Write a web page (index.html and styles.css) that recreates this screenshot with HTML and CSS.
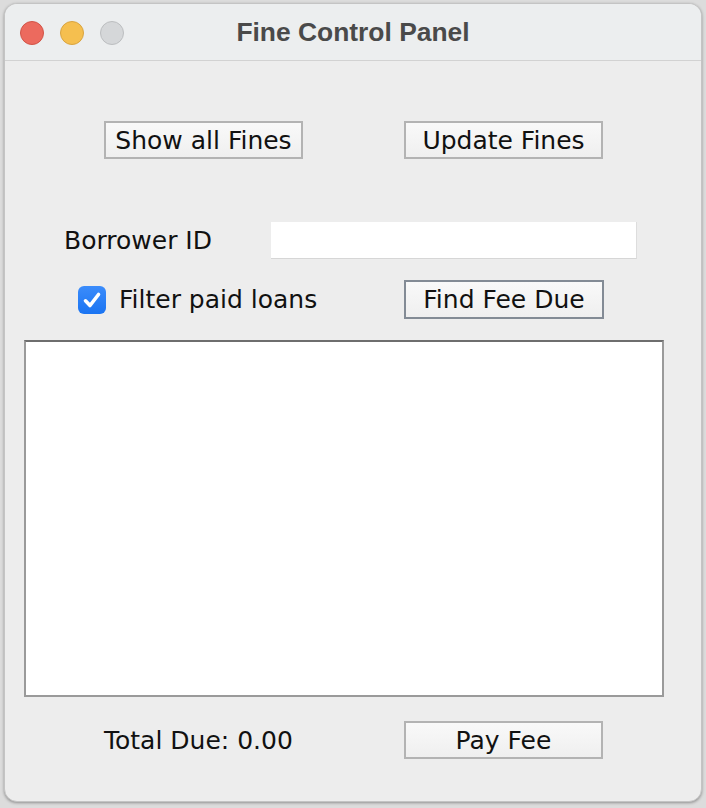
FILE: index.html
```html
<!DOCTYPE html>
<html lang="en">
<head>
<meta charset="utf-8">
<title>Fine Control Panel</title>
<link rel="stylesheet" href="styles.css">
</head>
<body>
<div class="window">
  <div class="titlebar">
    <div class="lights">
      <span class="light red"></span>
      <span class="light yellow"></span>
      <span class="light gray"></span>
    </div>
    <div class="title">Fine Control Panel</div>
    <div></div>
  </div>
  <div class="content">
    <div class="row row-top">
      <button class="btn">Show all Fines</button>
      <button class="btn">Update Fines</button>
    </div>
    <div class="row row-borrower">
      <label class="label">Borrower ID</label>
      <input class="field" type="text">
    </div>
    <div class="row row-filter">
      <span class="check">
        <svg viewBox="0 0 28 28" width="28" height="28"><path d="M7.5 14.8 L12 19.5 L20.5 8.5" fill="none" stroke="#fff" stroke-width="3.6" stroke-linecap="round" stroke-linejoin="round"/></svg>
      </span>
      <span class="check-label">Filter paid loans</span>
      <button class="btn btn-focus">Find Fee Due</button>
    </div>
    <div class="listbox"></div>
    <div class="row row-bottom">
      <span class="total">Total Due: 0.00</span>
      <button class="btn">Pay Fee</button>
    </div>
  </div>
</div>
</body>
</html>
```
FILE: styles.css
```css
html, body {
  margin: 0;
  padding: 0;
}
body {
  background: #dcdcdc;
  width: 706px;
  height: 808px;
  overflow: hidden;
  font-family: "DejaVu Sans", "Liberation Sans", sans-serif;
}
.window {
  margin: 3px 0 0 4px;
  width: 696px;
  height: 797px;
  border: 1px solid #c4c4c4;
  border-radius: 13px;
  background: #ededed;
  overflow: hidden;
  box-shadow: 0 1px 3px rgba(0,0,0,0.35);
}
.titlebar {
  height: 56px;
  border-bottom: 1px solid #d2d2d2;
  background: #eceeef;
  display: grid;
  grid-template-columns: 1fr auto 1fr;
  align-items: center;
}
.lights {
  display: flex;
  gap: 16px;
  padding-left: 15px;
  padding-top: 1px;
}
.light {
  width: 22px;
  height: 22px;
  border-radius: 50%;
  border: 1px solid;
}
.red { background: #ec6a5e; border-color: #d25447; }
.yellow { background: #f5bf4f; border-color: #d9a440; }
.gray { background: #d5d7d9; border-color: #bcbec0; }
.title {
  font-family: "Liberation Sans", Arial, sans-serif;
  font-weight: bold;
  font-size: 26.4px;
  color: #4a4a4a;
  padding-top: 1px;
}
.content {
  display: flex;
  flex-direction: column;
  font-size: 25px;
  color: #111;
}
.row {
  display: flex;
  align-items: center;
}
.btn {
  font-family: "DejaVu Sans", "Liberation Sans", sans-serif;
  font-size: 25px;
  color: #111;
  width: 199px;
  height: 38px;
  padding: 0;
  border: 2px solid #b3b3b3;
  border-radius: 0;
  background: linear-gradient(#f9f9f9, #efefef);
  line-height: 1;
}
.btn-focus {
  border-color: #838b95;
  height: 39px;
  width: 200px;
}
.row-top {
  margin-top: 60px;
  padding-left: 99px;
  gap: 101px;
}
.row-borrower {
  margin-top: 63px;
  padding-left: 59px;
}
.label {
  width: 207px;
}
.field {
  width: 366px;
  height: 37px;
  box-sizing: border-box;
  border: none;
  border-right: 1px solid #dddddd;
  border-bottom: 1px solid #d6d6d6;
  background: #fff;
  margin: 0;
  padding: 0;
}
.row-filter {
  margin-top: 21px;
  padding-left: 73px;
}
.check {
  width: 28px;
  height: 28px;
  border-radius: 6px;
  background: linear-gradient(#3b8cfb, #1a74f2);
  display: flex;
}
.check-label {
  margin-left: 13px;
  width: 285px;
}
.listbox {
  margin: 21px 0 0 19px;
  width: 636px;
  height: 353px;
  background: #fff;
  border: 2px solid #9a9a9a;
  border-top-color: #6e6e6e;
}
.row-bottom {
  margin-top: 24px;
  padding-left: 99px;
}
.total {
  width: 300px;
}
```
